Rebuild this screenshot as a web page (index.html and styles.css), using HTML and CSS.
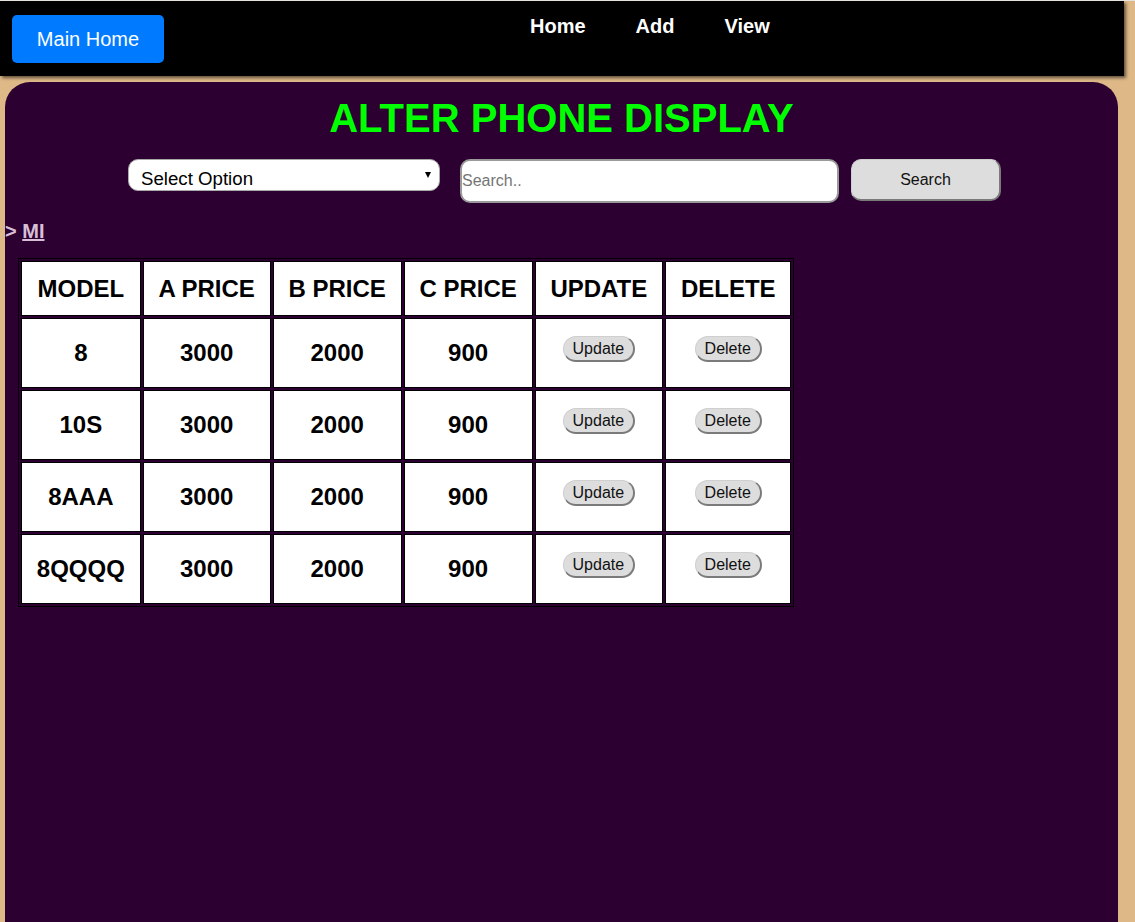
FILE: index.html
```html
<!DOCTYPE html>
<html>
<head>
<meta charset="utf-8">
<title>Alter Phone Display</title>
<link rel="stylesheet" href="styles.css">
</head>
<body>
<header class="navbar">
  <button class="main-home">Main Home</button>
  <nav class="nav-links">
    <a href="#">Home</a>
    <a href="#">Add</a>
    <a href="#">View</a>
  </nav>
</header>
<main class="panel">
  <h1 class="title">ALTER PHONE DISPLAY</h1>
  <div class="search-row">
    <div class="select-wrap">
      <select class="brand-select">
        <option>Select Option</option>
      </select>
    </div>
    <input class="search-input" type="text" placeholder="Search..">
    <button class="search-btn">Search</button>
  </div>
  <h3 class="crumb">&gt; <a href="#">MI</a></h3>
  <table class="phones">
    <thead>
      <tr><th>MODEL</th><th>A PRICE</th><th>B PRICE</th><th>C PRICE</th><th>UPDATE</th><th>DELETE</th></tr>
    </thead>
    <tbody>
      <tr><td>8</td><td>3000</td><td>2000</td><td>900</td><td class="act"><button class="pill">Update</button></td><td class="act"><button class="pill">Delete</button></td></tr>
      <tr><td>10S</td><td>3000</td><td>2000</td><td>900</td><td class="act"><button class="pill">Update</button></td><td class="act"><button class="pill">Delete</button></td></tr>
      <tr><td>8AAA</td><td>3000</td><td>2000</td><td>900</td><td class="act"><button class="pill">Update</button></td><td class="act"><button class="pill">Delete</button></td></tr>
      <tr><td>8QQQQ</td><td>3000</td><td>2000</td><td>900</td><td class="act"><button class="pill">Update</button></td><td class="act"><button class="pill">Delete</button></td></tr>
    </tbody>
  </table>
</main>
</body>
</html>
```
FILE: styles.css
```css
html, body {
  margin: 0;
  padding: 0;
}
body {
  background: #deb887;
  font-family: "Liberation Sans", Arial, sans-serif;
  border-top: 1px solid #e6e2dc;
  overflow: hidden;
}
.navbar {
  width: 1124px;
  height: 75px;
  background: #000;
  box-shadow: 2px 2px 3px rgba(0, 0, 0, 0.55);
  display: flex;
  align-items: flex-start;
}
.main-home {
  margin: 14px 0 0 12px;
  width: 152px;
  height: 48px;
  background: #007bff;
  color: #fff;
  border: none;
  border-radius: 5px;
  font-family: "Liberation Sans", Arial, sans-serif;
  font-size: 20px;
  padding: 0;
}
.nav-links {
  display: flex;
  margin: 14px 0 0 341px;
}
.nav-links a {
  color: #fff;
  text-decoration: none;
  font-weight: bold;
  font-size: 20px;
  padding: 0 25px;
}
.panel {
  margin: 6px 0 0 5px;
  width: 1113px;
  min-height: 845px;
  background: #2c0030;
  border-radius: 25px 25px 0 0;
  padding-top: 13px;
  box-sizing: border-box;
}
.title {
  margin: 0;
  text-align: center;
  color: #00ff00;
  font-size: 40px;
  font-weight: bold;
  line-height: 46px;
}
.search-row {
  display: flex;
  align-items: flex-start;
  justify-content: center;
  margin-top: 18px;
  padding-left: 6px;
}
.select-wrap {
  position: relative;
  width: 312px;
  height: 32px;
  margin-right: 20px;
}
.select-wrap::after {
  content: "";
  position: absolute;
  left: 297px;
  top: 13px;
  border-left: 3.5px solid transparent;
  border-right: 3.5px solid transparent;
  border-top: 6px solid #000;
  pointer-events: none;
}
.brand-select {
  -webkit-appearance: none;
  appearance: none;
  width: 312px;
  height: 32px;
  box-sizing: border-box;
  border: 1px solid #a9a9a9;
  border-radius: 10px;
  background: #fff;
  color: #000;
  font-family: "Liberation Sans", Arial, sans-serif;
  font-size: 18.67px;
  padding: 6px 0 0 12px;
  margin: 0;
}
.search-input {
  width: 379px;
  height: 44px;
  box-sizing: border-box;
  border: 2px solid #9a9a9a;
  border-radius: 10px;
  background: #fff;
  font-family: "Liberation Sans", Arial, sans-serif;
  font-size: 16px;
  padding: 0;
  margin: 0 12px 0 0;
  outline: none;
}
.search-input::placeholder {
  color: #757575;
}
.search-btn {
  width: 150px;
  height: 42px;
  box-sizing: border-box;
  background: #dddddd;
  border-style: solid;
  border-width: 1px 2px 2px 1px;
  border-color: #cfcfcf #7a7a7a #7a7a7a #cfcfcf;
  border-radius: 10px;
  font-family: "Liberation Sans", Arial, sans-serif;
  font-size: 16px;
  color: #111;
  padding: 0;
  margin: 0;
}
.crumb {
  margin: 17px 0 15px 0;
  font-size: 20px;
  font-weight: bold;
  color: #d8bfd8;
  line-height: 23px;
}
.crumb a {
  color: #d8bfd8;
  text-decoration: underline;
}
.phones {
  margin-left: 13px;
  border: 1px solid #000;
  border-spacing: 2px;
}
.phones th,
.phones td {
  background: #fff;
  border: 1px solid #000;
  font-size: 24px;
  font-weight: bold;
  text-align: center;
  color: #000;
}
.phones th {
  padding: 13px 14.8px;
  line-height: 27px;
}
.phones td {
  padding: 20px 14.8px;
  line-height: 28px;
}
.phones td.act {
  padding: 10px 14.8px;
  font-size: 16px;
  vertical-align: middle;
}
.pill {
  display: block;
  margin: 0 auto 8px;
  height: 26px;
  box-sizing: border-box;
  padding: 0 9px;
  background: #dddddd;
  border-style: solid;
  border-width: 1px 2px 2px 1px;
  border-color: #cfcfcf #7a7a7a #7a7a7a #cfcfcf;
  border-radius: 13px;
  font-family: "Liberation Sans", Arial, sans-serif;
  font-size: 16px;
  font-weight: normal;
  color: #111;
}
```
